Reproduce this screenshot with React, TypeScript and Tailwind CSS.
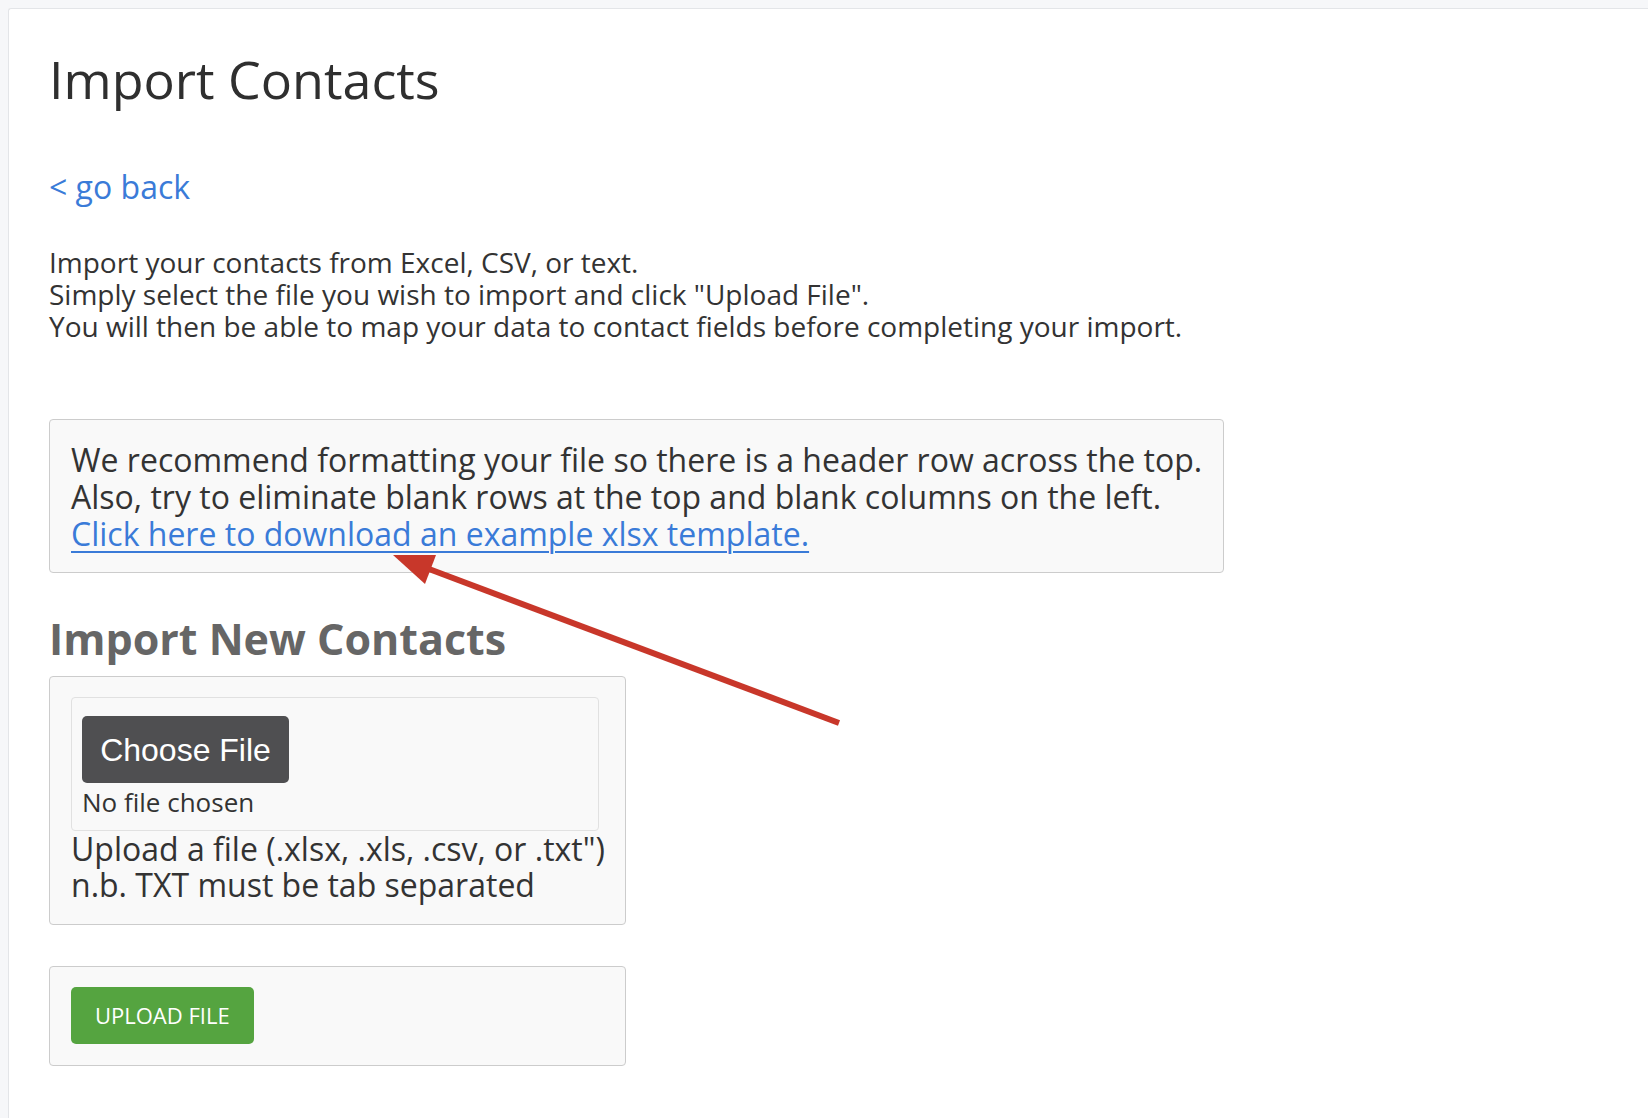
import React from "react";

function PointerArrow() {
  // annotation arrow drawn over the page
  return (
    <svg
      className="pointer-events-none absolute left-0 top-0"
      width="1648"
      height="1118"
      viewBox="0 0 1648 1118"
    >
      <line x1="429" y1="569" x2="839" y2="723" stroke="#c8372a" strokeWidth="6" />
      <polygon points="393,555 436,555 425,584" fill="#c8372a" />
    </svg>
  );
}

function FileBox() {
  return (
    <div className="w-[577px] rounded-[4px] border border-[#cccccc] bg-[#f9f9f9] px-[21px] pb-[21px] pt-[20px]">
      <div className="w-[528px] rounded-[4px] border border-[#e1e1e1] px-[10px] pb-[8px] pt-[18px]">
        <button className="flex h-[67px] w-[207px] items-center justify-center rounded-[5px] bg-[#4f4f51] font-['Liberation_Sans',Arial,sans-serif] text-[32px] text-white">
          Choose File
        </button>
        <p className="text-[26px] leading-normal text-[#333]">No file chosen</p>
      </div>
      <p className="whitespace-nowrap text-[32px] leading-[36px] text-[#333]">
        Upload a file (.xlsx, .xls, .csv, or .txt")
        <br />
        n.b. TXT must be tab separated
      </p>
    </div>
  );
}

export default function App() {
  return (
    <div className="relative flex min-h-screen bg-[#f6f7f9] pl-[8px] pt-[8px] font-['Open_Sans',sans-serif] text-[#333]">
      <div className="flex-1 rounded-tl-[3px] border-l border-t border-[#e3e5e8] bg-white pl-[40px] pt-[40px]">
        <h1 className="text-[52px] leading-[60px] font-normal text-[#2f2f2f]">Import Contacts</h1>

        <a href="#" className="mt-[60px] block text-[32px] leading-[36px] text-[#3a7bd8]">
          &lt; go back
        </a>

        <p className="mt-[41px] whitespace-nowrap text-[28px] leading-[32px] text-[#333]">
          Import your contacts from Excel, CSV, or text.
          <br />
          Simply select the file you wish to import and click "Upload File".
          <br />
          You will then be able to map your data to contact fields before completing your import.
        </p>

        <div className="mt-[77px] w-[1175px] whitespace-nowrap rounded-[4px] border border-[#cccccc] bg-[#f9f9f9] px-[21px] pb-[20px] pt-[21px] text-[32px] leading-[37px] text-[#333]">
          We recommend formatting your file so there is a header row across the top.
          <br />
          Also, try to eliminate blank rows at the top and blank columns on the left.
          <br />
          <a href="#" className="text-[#3a7bd8] underline decoration-2 underline-offset-[5px]">
            Click here to download an example xlsx template.
          </a>
        </div>

        <h2 className="mt-[42px] text-[43px] leading-[48px] font-bold text-[#666666]">Import New Contacts</h2>

        <div className="mt-[13px]">
          <FileBox />
        </div>

        <div className="mt-[41px] w-[577px] rounded-[4px] border border-[#cccccc] bg-[#f9f9f9] px-[21px] pb-[21px] pt-[20px]">
          <button className="flex h-[57px] items-center rounded-[5px] bg-[#55a440] px-[24px] text-[22px] uppercase text-white">
            Upload File
          </button>
        </div>
      </div>
      <PointerArrow />
    </div>
  );
}
